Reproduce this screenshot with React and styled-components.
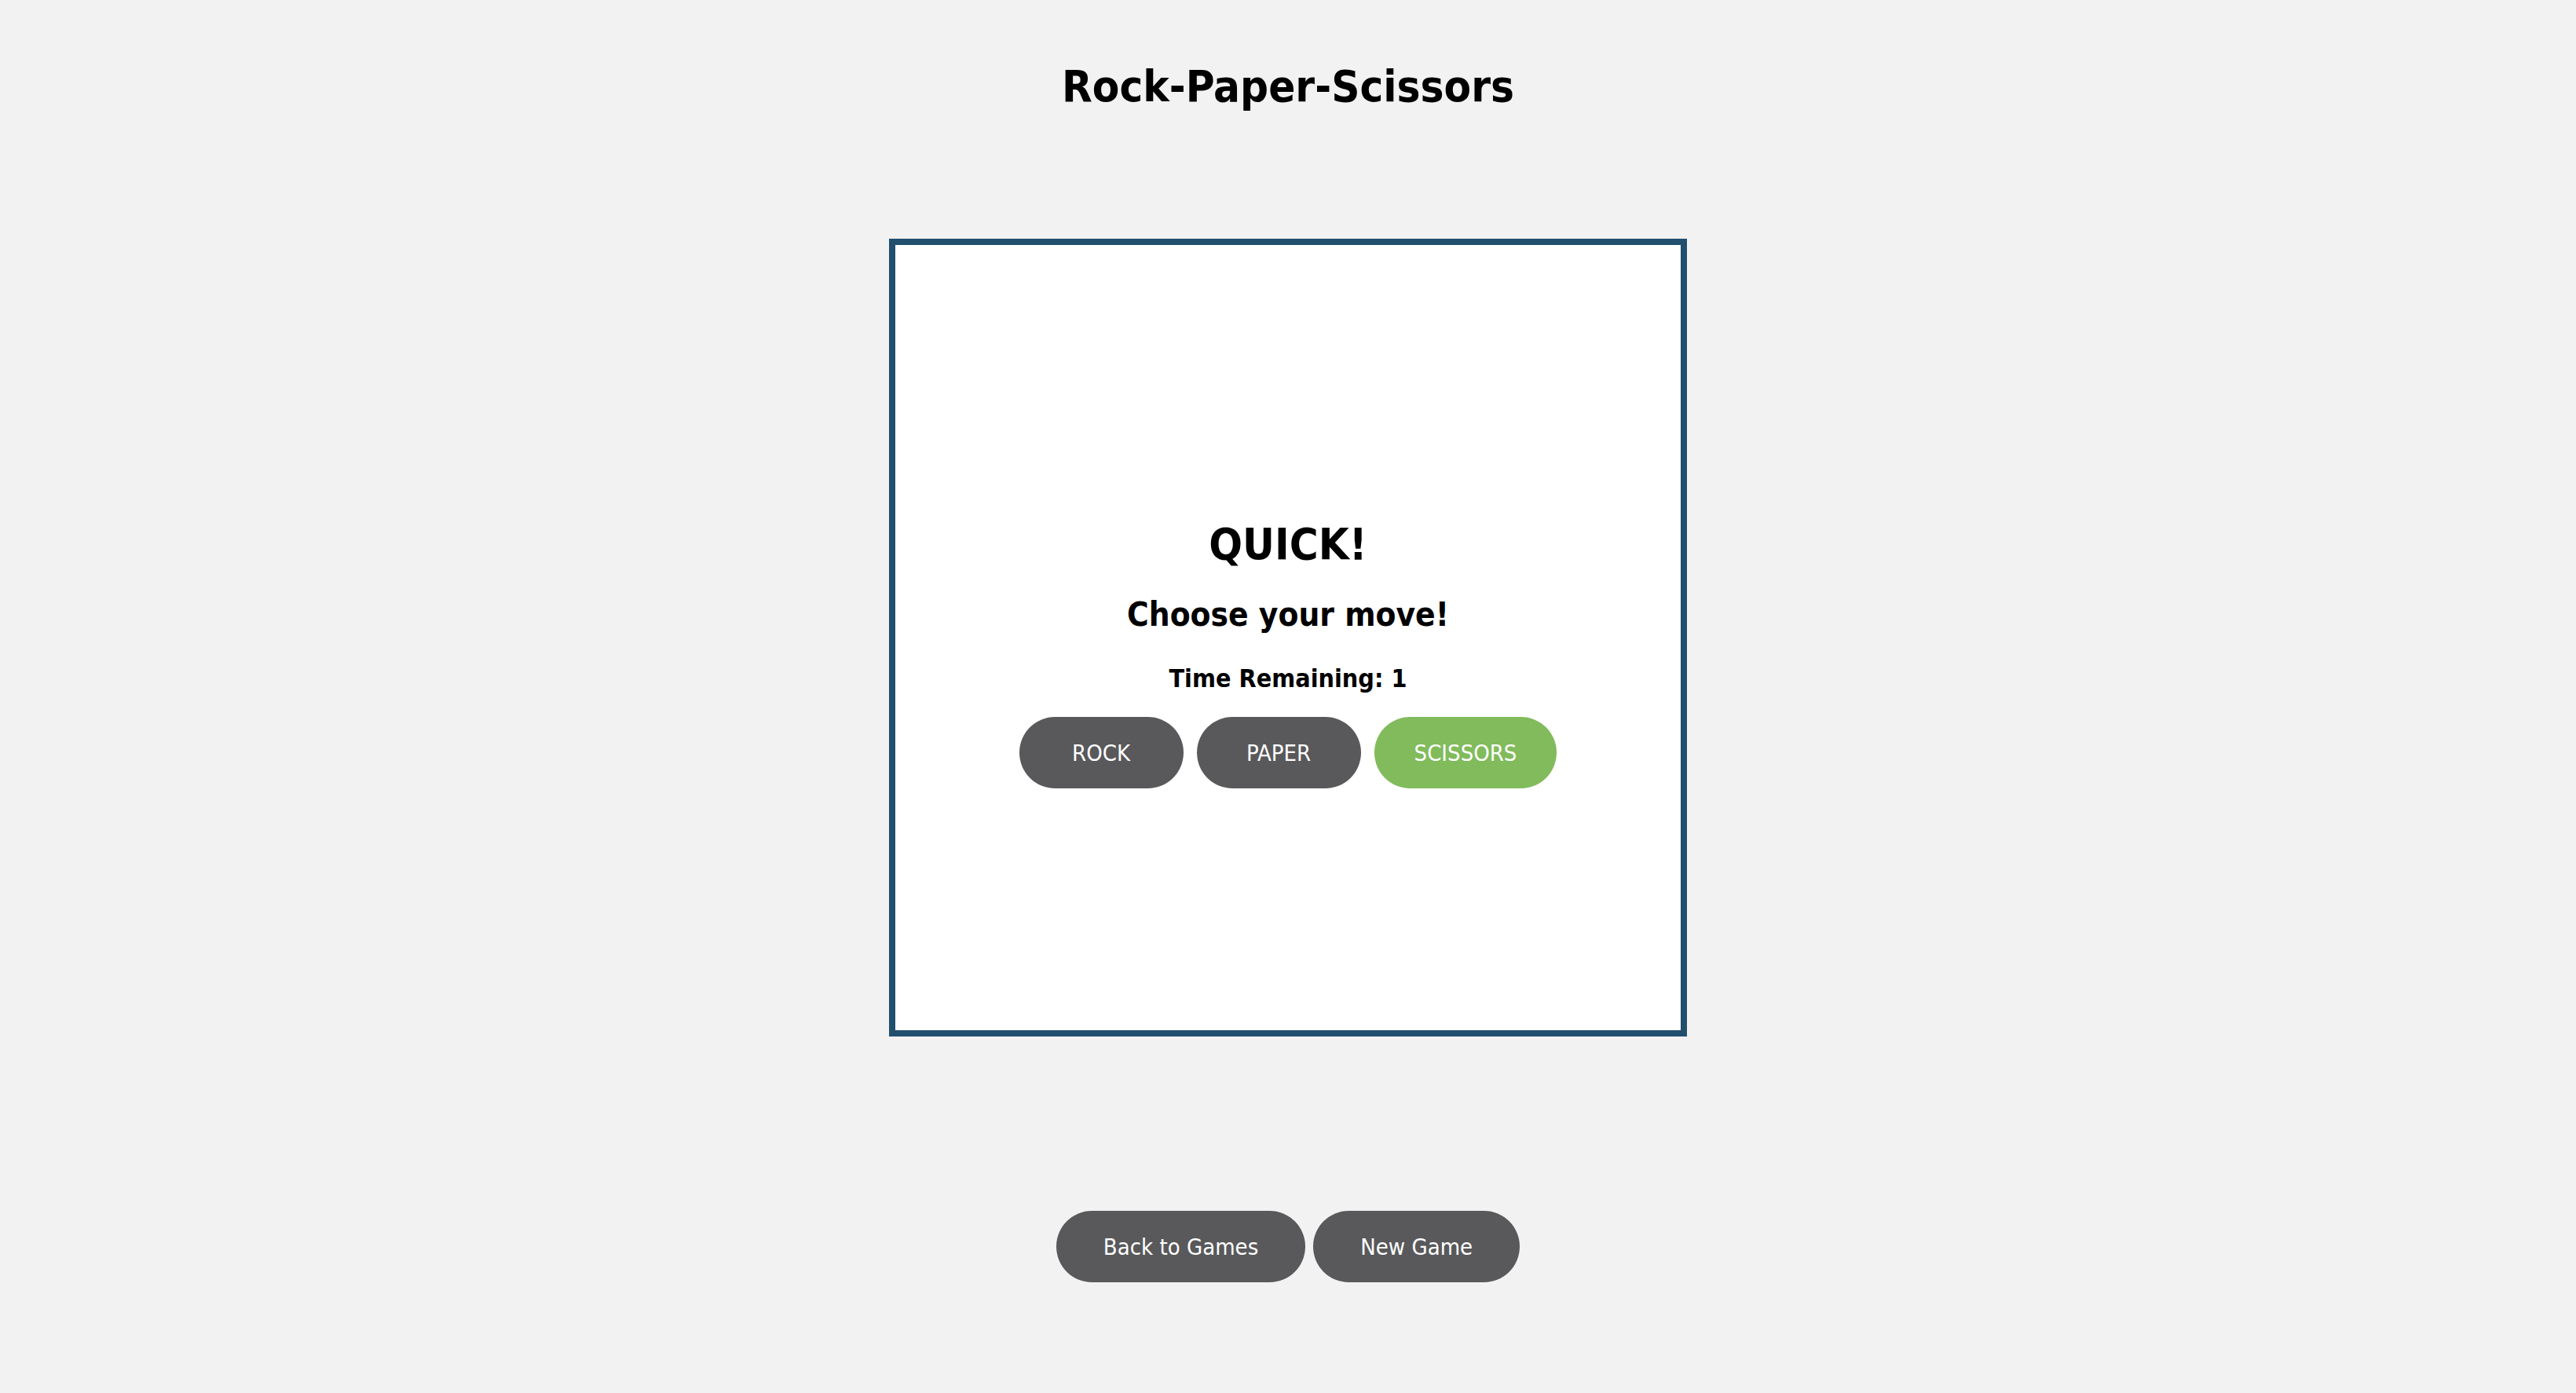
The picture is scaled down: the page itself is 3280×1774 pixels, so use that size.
import React, { useState } from 'react';
import styled, { createGlobalStyle } from 'styled-components';

const GlobalStyle = createGlobalStyle`
  html, body {
    margin: 0;
    padding: 0;
    background: #f2f2f2;
  }
  body {
    font-family: 'DejaVu Sans Condensed', 'DejaVu Sans', sans-serif;
    color: #000;
  }
`;

const Page = styled.div`
  min-height: 1774px;
  display: flex;
  flex-direction: column;
  align-items: center;
  padding-top: 76px;
  box-sizing: border-box;
`;

const Title = styled.h1`
  margin: 0;
  font-size: 56px;
  line-height: 67px;
  font-weight: bold;
  color: #000;
`;

const GameBoard = styled.div`
  margin-top: 161px;
  width: 1016px;
  height: 1016px;
  box-sizing: border-box;
  border: 8px solid #234f6f;
  background: #fff;
  display: flex;
  flex-direction: column;
  align-items: center;
  justify-content: center;
  padding-top: 39px;
`;

const Heading = styled.h2`
  margin: 0;
  font-size: ${p => p.size}px;
  line-height: 1.2;
  font-weight: bold;
  margin-top: ${p => p.gap || 0}px;
`;

const MoveRow = styled.div`
  display: flex;
  gap: 17px;
  margin-top: 30px;
`;

const MoveButton = styled.button`
  min-width: 209px;
  height: 91px;
  padding: 0 51px;
  border: none;
  border-radius: 46px;
  background: ${p => (p.selected ? '#81bb5c' : '#59595b')};
  color: #fff;
  font-family: inherit;
  font-size: 29px;
  cursor: pointer;
`;

const ActionRow = styled.div`
  display: flex;
  gap: 10px;
  margin-top: 222px;
`;

const ActionButton = styled.button`
  height: 91px;
  padding: 0 60px;
  border: none;
  border-radius: 46px;
  background: #59595b;
  color: #fff;
  font-family: inherit;
  font-size: 29px;
  cursor: pointer;
`;

const moves = ['ROCK', 'PAPER', 'SCISSORS'];

export default function App() {
  const [choice, setChoice] = useState('SCISSORS');

  return (
    <>
      <GlobalStyle />
      <Page>
        <Title>Rock-Paper-Scissors</Title>
        <GameBoard>
          <Heading size={56}>QUICK!</Heading>
          <Heading size={42} gap={32}>Choose your move!</Heading>
          <Heading size={32} gap={37}>Time Remaining: 1</Heading>
          <MoveRow>
            {moves.map(m => (
              <MoveButton key={m} selected={choice === m} onClick={() => setChoice(m)}>
                {m}
              </MoveButton>
            ))}
          </MoveRow>
        </GameBoard>
        <ActionRow>
          <ActionButton>Back to Games</ActionButton>
          <ActionButton>New Game</ActionButton>
        </ActionRow>
      </Page>
    </>
  );
}
